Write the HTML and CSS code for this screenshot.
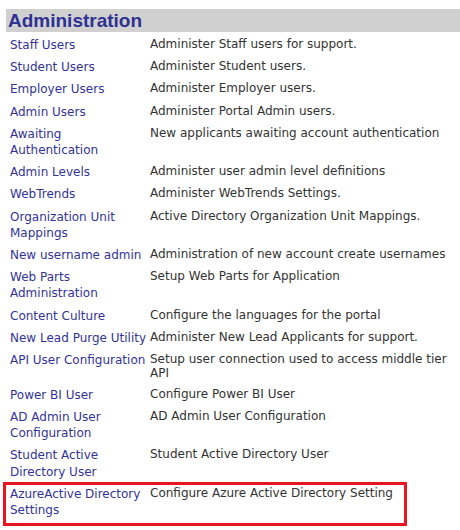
FILE: index.html
```html
<!DOCTYPE html>
<html>
<head>
<meta charset="utf-8">
<link rel="stylesheet" href="styles.css">
</head>
<body>
<div class="admin">
  <h2 class="admin-title">Administration</h2>
  <table class="admin-table">
    <tr><td class="name"><a href="#">Staff Users</a></td><td class="desc">Administer Staff users for support.</td></tr>
    <tr><td class="name"><a href="#">Student Users</a></td><td class="desc">Administer Student users.</td></tr>
    <tr><td class="name"><a href="#">Employer Users</a></td><td class="desc">Administer Employer users.</td></tr>
    <tr><td class="name"><a href="#">Admin Users</a></td><td class="desc">Administer Portal Admin users.</td></tr>
    <tr><td class="name"><a href="#">Awaiting Authentication</a></td><td class="desc">New applicants awaiting account authentication</td></tr>
    <tr><td class="name"><a href="#">Admin Levels</a></td><td class="desc">Administer user admin level definitions</td></tr>
    <tr><td class="name"><a href="#">WebTrends</a></td><td class="desc">Administer WebTrends Settings.</td></tr>
    <tr><td class="name"><a href="#">Organization Unit Mappings</a></td><td class="desc">Active Directory Organization Unit Mappings.</td></tr>
    <tr><td class="name"><a href="#">New username admin</a></td><td class="desc">Administration of new account create usernames</td></tr>
    <tr><td class="name"><a href="#">Web Parts Administration</a></td><td class="desc">Setup Web Parts for Application</td></tr>
    <tr><td class="name"><a href="#">Content Culture</a></td><td class="desc">Configure the languages for the portal</td></tr>
    <tr><td class="name"><a href="#">New Lead Purge Utility</a></td><td class="desc">Administer New Lead Applicants for support.</td></tr>
    <tr><td class="name"><a href="#">API User Configuration</a></td><td class="desc">Setup user connection used to access middle tier API</td></tr>
    <tr><td class="name"><a href="#">Power BI User</a></td><td class="desc">Configure Power BI User</td></tr>
    <tr><td class="name"><a href="#">AD Admin User Configuration</a></td><td class="desc">AD Admin User Configuration</td></tr>
    <tr><td class="name"><a href="#">Student Active Directory User</a></td><td class="desc">Student Active Directory User</td></tr>
    <tr><td class="name highlight"><a href="#">AzureActive Directory Settings</a></td><td class="desc">Configure Azure Active Directory Setting</td></tr>
  </table>
</div>
</body>
</html>
```
FILE: styles.css
```css
html, body {
  margin: 0;
  padding: 0;
  background: #ffffff;
}

body {
  font-family: "DejaVu Sans", Verdana, sans-serif;
  font-size: 12px;
  color: #333333;
}

.admin {
  padding: 9px 0 20px 6px;
}

.admin-title {
  margin: 0;
  height: 23px;
  line-height: 23px;
  padding-left: 2px;
  background: #d0d0d0;
  color: #2e3192;
  font-family: "Liberation Sans", Arial, sans-serif;
  font-size: 19px;
  font-weight: bold;
}

.admin-table {
  margin-top: 2px;
  width: 454px;
  border-collapse: collapse;
  border-spacing: 0;
  table-layout: fixed;
}

.admin-table td {
  vertical-align: top;
  padding: 3px 0;
}

.name {
  width: 140px;
  padding-left: 4px !important;
  line-height: 16.2px;
}

.name a {
  color: #333399;
  text-decoration: none;
}

.desc {
  line-height: 14.4px;
  color: #333333;
  padding-left: 0 !important;
}

.highlight {
  position: relative;
}

.highlight::after {
  content: "";
  position: absolute;
  left: -3px;
  top: -1px;
  width: 404px;
  height: 44px;
  box-sizing: border-box;
  border: 3px solid #e8141f;
  pointer-events: none;
}
```
